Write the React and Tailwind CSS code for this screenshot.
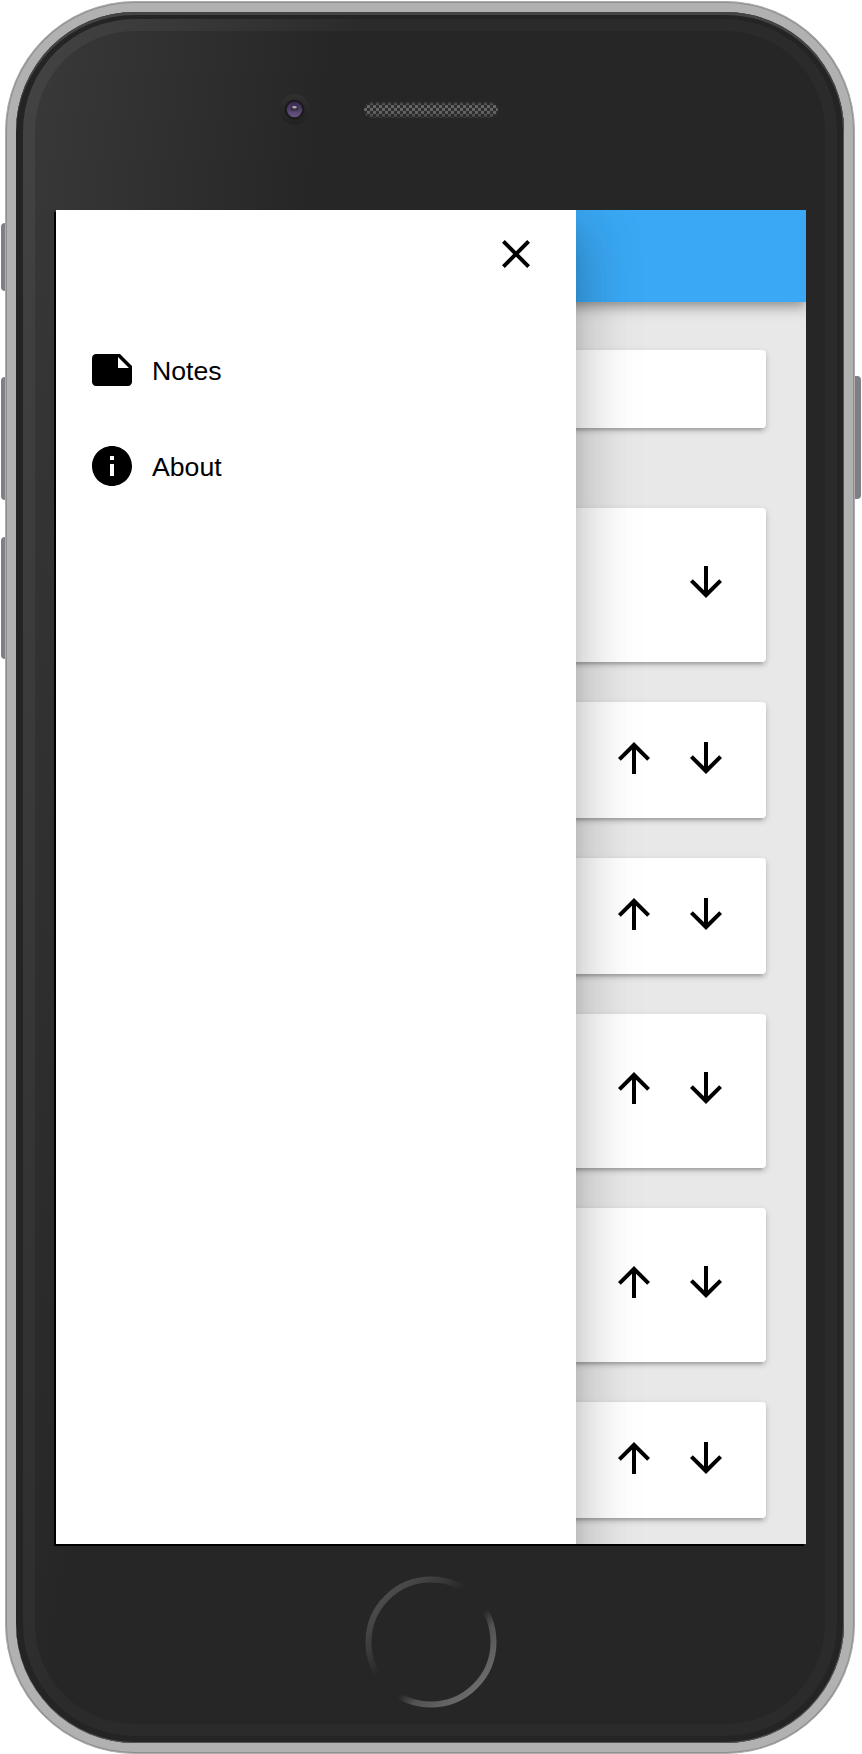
import React from "react";

const PATHS = {
  close: "M19 6.41L17.59 5 12 10.59 6.41 5 5 6.41 10.59 12 5 17.59 6.41 19 12 13.41 17.59 19 19 17.59 13.41 12z",
  note: "M22 10l-6-6H4c-1.1 0-2 .9-2 2v12.01c0 1.1.9 1.99 2 1.99l16-.01c1.1 0 2-.89 2-1.99v-8zm-7-4.5l5.5 5.5H15V5.5z",
  info: "M12 2C6.48 2 2 6.48 2 12s4.48 10 10 10 10-4.48 10-10S17.52 2 12 2zm1 15h-2v-6h2v6zm0-8h-2V7h2v2z",
  up: "M4 12l1.41 1.41L11 7.83V20h2V7.83l5.58 5.59L20 12l-8-8-8 8z",
  down: "M20 12l-1.41-1.41L13 16.17V4h-2v12.17l-5.58-5.59L4 12l8 8 8-8z",
};

function Icon({ name }) {
  return (
    <svg viewBox="0 0 24 24" className="block size-12 shrink-0" fill="currentColor" aria-hidden="true">
      <path d={PATHS[name]} />
    </svg>
  );
}

const CARD =
  "bg-white rounded-[4px] shadow-[0_6px_2px_-4px_rgba(0,0,0,0.12),0_3px_5px_0_rgba(0,0,0,0.16),0_2px_8px_0_rgba(0,0,0,0.08)]";

function NoteCard({ tall, first }) {
  return (
    <li
      className={`${CARD} flex items-center justify-end gap-6 pr-9 ${tall ? "h-[154px] pb-1.5" : "h-[116px] pb-1"}`}
    >
      {!first && (
        <button type="button">
          <Icon name="up" />
        </button>
      )}
      <button type="button">
        <Icon name="down" />
      </button>
    </li>
  );
}

function Drawer() {
  return (
    <nav className="absolute top-0 left-0 flex h-[1400px] w-[520px] flex-col bg-white shadow-[0_16px_20px_-10px_rgba(0,0,0,0.2),0_32px_48px_4px_rgba(0,0,0,0.14),0_12px_60px_10px_rgba(0,0,0,0.12)]">
      <div className="flex justify-end pt-5 pr-9">
        <button type="button">
          <Icon name="close" />
        </button>
      </div>
      <ul className="mt-[68px] flex flex-col gap-12 pl-8 text-[26.67px] leading-[46px]">
        <li className="flex items-center gap-4">
          <Icon name="note" />
          <span className="pt-0.5">Notes</span>
        </li>
        <li className="flex items-center gap-4">
          <Icon name="info" />
          <span className="pt-0.5">About</span>
        </li>
      </ul>
    </nav>
  );
}

function Screen() {
  return (
    <div className="relative ml-0.5 h-[1334px] w-[750px] -translate-y-0.5 overflow-hidden bg-[#e8e8e8]">
      <header className="h-[92px] bg-[#3aa8f4] shadow-[0_4px_8px_-2px_rgba(0,0,0,0.2),0_8px_10px_0_rgba(0,0,0,0.14),0_2px_20px_0_rgba(0,0,0,0.12)]" />
      <main className="px-10 pt-12">
        <div className={`${CARD} h-[78px]`} />
        <ul className="mt-20 flex flex-col gap-10">
          <NoteCard tall first />
          <NoteCard />
          <NoteCard />
          <NoteCard tall />
          <NoteCard tall />
          <NoteCard />
        </ul>
      </main>
      <Drawer />
    </div>
  );
}

function Camera() {
  return (
    <svg width="32" height="32" viewBox="0 0 32 32" className="block" aria-hidden="true">
      <defs>
        <linearGradient id="bezel" x1="0" y1="0" x2="0" y2="1">
          <stop offset="0" stopColor="#303030" />
          <stop offset="1" stopColor="#212121" />
        </linearGradient>
        <linearGradient id="lens" x1="0" y1="0" x2="0" y2="1">
          <stop offset="0" stopColor="#35264d" />
          <stop offset="1" stopColor="#6a5686" />
        </linearGradient>
        <linearGradient id="pupil" x1="0" y1="0" x2="0" y2="1">
          <stop offset="0" stopColor="#2d2738" />
          <stop offset="0.4" stopColor="#2d2738" />
          <stop offset="1" stopColor="#62577a" />
        </linearGradient>
      </defs>
      <circle cx="16.5" cy="16.5" r="15.3" fill="url(#bezel)" />
      <circle cx="16.5" cy="16.5" r="10" fill="#1b1b1c" />
      <circle cx="16.5" cy="16.5" r="7.7" fill="url(#lens)" />
      <circle cx="16.5" cy="16.5" r="3.8" fill="url(#pupil)" />
      <ellipse cx="16.5" cy="14.2" rx="2.4" ry="1.2" fill="#b0aab8" />
    </svg>
  );
}

function Speaker() {
  return (
    <svg width="134" height="16" viewBox="0 0 134 16" className="block" aria-hidden="true">
      <defs>
        <pattern id="mesh" width="6" height="6" patternUnits="userSpaceOnUse">
          <rect width="6" height="6" fill="#2e2e2e" />
          <rect width="3" height="3" fill="#686868" />
          <rect x="3" y="3" width="3" height="3" fill="#686868" />
        </pattern>
        <linearGradient id="meshFade" x1="0" y1="0" x2="0" y2="1">
          <stop offset="0" stopColor="#262626" stopOpacity="0.7" />
          <stop offset="0.25" stopColor="#262626" stopOpacity="0" />
          <stop offset="0.7" stopColor="#262626" stopOpacity="0.1" />
          <stop offset="1" stopColor="#262626" stopOpacity="0.7" />
        </linearGradient>
      </defs>
      <rect y="0.5" width="134" height="15" rx="7.5" fill="url(#mesh)" />
      <rect y="0.5" width="134" height="15" rx="7.5" fill="url(#meshFade)" />
    </svg>
  );
}

function HomeButton() {
  return (
    <svg width="132" height="132" viewBox="0 0 132 132" className="block" aria-hidden="true">
      <defs>
        <linearGradient id="home" gradientUnits="userSpaceOnUse" x1="16" y1="16" x2="116" y2="116">
          <stop offset="0" stopColor="#505050" />
          <stop offset="0.24" stopColor="#3a3a3a" />
          <stop offset="0.4" stopColor="#262626" />
          <stop offset="0.61" stopColor="#262626" />
          <stop offset="0.72" stopColor="#525252" />
          <stop offset="1" stopColor="#707070" />
        </linearGradient>
      </defs>
      <circle cx="66" cy="66" r="62.5" fill="none" stroke="url(#home)" strokeWidth="6" />
    </svg>
  );
}

export default function App() {
  return (
    <div className="relative h-[1754px] w-[862px] overflow-hidden bg-white pt-px pl-[5px] font-['Liberation_Sans',Arial,sans-serif] text-black">
      <i className="absolute top-[223px] left-px h-[68px] w-3 rounded-[4px] bg-[#7f7f86]" />
      <i className="absolute top-[377px] left-px h-[123px] w-3 rounded-[4px] bg-[#7f7f86]" />
      <i className="absolute top-[537px] left-px h-[122px] w-3 rounded-[4px] bg-[#7f7f86]" />
      <i className="absolute top-[376px] right-px h-[123px] w-3 rounded-[4px] bg-[#7f7f86]" />
      <div className="relative h-[1753px] w-[850px] rounded-[130px] border border-[#adadad] bg-[#8f8f8f] p-px">
        <div className="h-full rounded-[128px] bg-[#b1b1b1] p-[9px]">
          <div className="h-full rounded-[119px] bg-[#242424] p-[7px] shadow-[inset_0_3px_0_#444,inset_0_-1px_0_#555,inset_-1px_0_0_#555]">
            <div className="h-full rounded-[112px] bg-[#2b2b2b] bg-[linear-gradient(100deg,#444_0%,#2b2b2b_30%)] p-3">
              <div className="h-full rounded-[100px] bg-[#262626] bg-[linear-gradient(100deg,#393939_0%,#262626_28%)]">
                <div className="flex h-[181px] pt-[62px] pl-[243px]">
                  <Camera />
                  <div className="mt-[9px] ml-[54px]">
                    <Speaker />
                  </div>
                </div>
                <div className="ml-[19px] h-[1334px] w-[750px] bg-black">
                  <Screen />
                </div>
                <div className="flex justify-center pt-[30px] pl-px">
                  <HomeButton />
                </div>
              </div>
            </div>
          </div>
        </div>
      </div>
    </div>
  );
}
